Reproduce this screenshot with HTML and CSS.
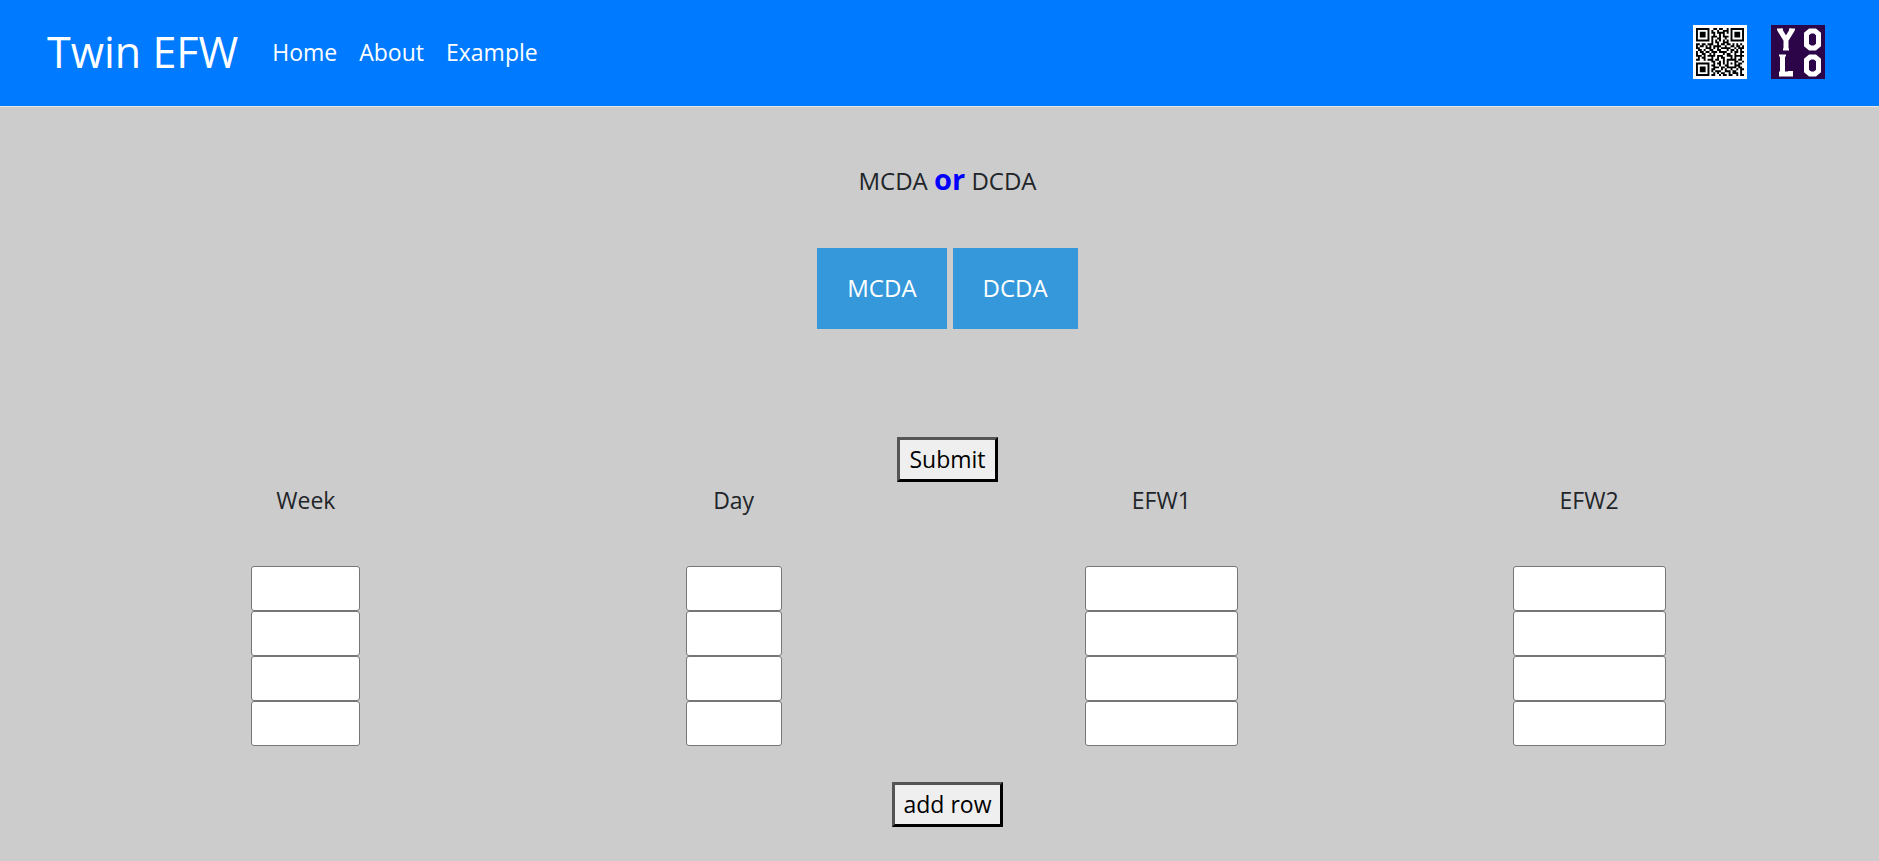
FILE: index.html
```html
<!DOCTYPE html>
<html lang="en">
<head>
<meta charset="utf-8">
<title>Twin EFW</title>
<link rel="stylesheet" href="styles.css">
</head>
<body>
<header class="navbar">
  <a class="brand" href="#">Twin EFW</a>
  <nav class="links">
    <a href="#">Home</a>
    <a href="#">About</a>
    <a href="#">Example</a>
  </nav>
  <div class="logos">
    <a href="#" aria-label="QR code">
      <svg class="logo" viewBox="0 0 54 54">
        <rect width="54" height="54" fill="#fff"/>
        <path id="modules" transform="translate(3 3) scale(1.92)" fill="#000"/>
      </svg>
    </a>
    <a href="#" aria-label="YOLO">
      <svg class="logo" viewBox="0 0 54 54">
        <rect width="54" height="54" fill="#2b0548"/>
        <g fill="none" stroke="#fff" stroke-width="5">
          <path d="M8.500 4.500 15 15 21.500 4.500M15 14V25"/>
          <path d="M12 24.500h6M6 4.500h6M18 4.500h6" stroke-width="2"/>
          <path d="M35.500 9 39 6H44L47.500 9V20L44 23H39L35.500 20Z"/>
          <path d="M11.500 30V49M8 49H19.500V46"/>
          <path d="M8 30.500h7" stroke-width="2"/>
          <path d="M35.500 35 39 32H44L47.500 35V46L44 49H39L35.500 46Z"/>
        </g>
      </svg>
    </a>
  </div>
</header>
<main class="content">
  <p class="prompt">MCDA <strong>or</strong> DCDA</p>
  <div class="choices">
    <button class="choice" type="button">MCDA</button>
    <button class="choice" type="button">DCDA</button>
  </div>
  <form class="form">
    <button class="action" type="submit">Submit</button>
    <div class="grid">
      <div class="column week"><h2 id="week">Week</h2><input type="number" aria-labelledby="week"><input type="number" aria-labelledby="week"><input type="number" aria-labelledby="week"><input type="number" aria-labelledby="week"></div>
      <div class="column day"><h2 id="day">Day</h2><input type="number" aria-labelledby="day"><input type="number" aria-labelledby="day"><input type="number" aria-labelledby="day"><input type="number" aria-labelledby="day"></div>
      <div class="column weight"><h2 id="efw1">EFW1</h2><input type="number" aria-labelledby="efw1"><input type="number" aria-labelledby="efw1"><input type="number" aria-labelledby="efw1"><input type="number" aria-labelledby="efw1"></div>
      <div class="column weight"><h2 id="efw2">EFW2</h2><input type="number" aria-labelledby="efw2"><input type="number" aria-labelledby="efw2"><input type="number" aria-labelledby="efw2"><input type="number" aria-labelledby="efw2"></div>
    </div>
    <button class="action" type="button">add row</button>
  </form>
</main>
<script src="qr.js"></script>
</body>
</html>
```

FILE: qr.js
```js
// One string per module row, "#" is a dark module.
const rows = [
  "#######..##.##..#.#######",
  "#.....#.#..#..###.#.....#",
  "#.###.#.##.####.#.#.###.#",
  "#.###.#..#..#.#...#.###.#",
  "#.###.#.###.#.###.#.###.#",
  "#.....#.#..##..#..#.....#",
  "#######.#.#.#.#.#.#######",
  "........#.##..###........",
  "##.##.###..#.##.##.#.#.#.",
  "#.##.#.#.####..#..##.##.#",
  "##...###.#.#.#####..#.###",
  ".##.#..##..##...#.##.#.#.",
  "#.##.##.###.####..#.##.##",
  "#..##..#.#....#.##..#..#.",
  "###.#.####.###..###.#####",
  ".#.##...#..#.##...#.#..#.",
  "##..#.###.##..#.#####.##.",
  "........##..#.#.#...##..#",
  "#######..#.##.#.#.#.#.##.",
  "#.....#.##..#..##...###..",
  "#.###.#..###.##.#####.##.",
  "#.###.#.##...#.#..#..#.##",
  "#.###.#.#.###..###.##..#.",
  "#.....#..#.#.##..#.###.#.",
  "#######.##..#.##.##..#.##",
];

const path = rows
  .map((row, y) => [...row].map((c, x) => (c === "#" ? `M${x} ${y}h1v1h-1z` : "")).join(""))
  .join("");
document.getElementById("modules").setAttribute("d", path);
```

FILE: styles.css
```css
* { box-sizing: border-box; }
body {
  margin: 0;
  background: #ccc;
  color: #212529;
  font: 24px/36px "Segoe UI", "Open Sans", "Noto Sans", sans-serif;
}
.navbar {
  display: flex;
  align-items: center;
  padding: 15px 54px 17px 47px;
  background: #007bff;
  border-bottom: 1px solid #e7e7e7;
}
.navbar a { color: #fff; text-decoration: none; }
.brand { font-size: 43px; line-height: 74px; margin-right: 34px; }
.links { display: flex; gap: 22px; font-size: 23px; font-weight: 500; }
.logos { display: flex; gap: 24px; margin-left: auto; }
.logo { display: block; width: 54px; height: 54px; }
.content {
  display: flex;
  flex-direction: column;
  align-items: center;
  padding: 52px 76px 32px 92px;
}
.prompt { margin: 0; line-height: 40px; }
.prompt strong { color: #00f; font-size: 29px; }
.choices { display: flex; gap: 6px; margin-top: 47px; }
.choice {
  padding: 22px 30px 23px;
  border: 0;
  background: #3498db;
  color: #fff;
  font: inherit;
  font-weight: 500;
}
.form {
  display: flex;
  flex-direction: column;
  align-items: center;
  width: 100%;
  margin-top: 108px;
  font-size: 23px;
}
.action {
  padding: 1px 9px 2px;
  border: 3px solid;
  border-color: #555 #000 #000 #555;
  background: #efefef;
  color: #000;
  font: inherit;
}
.grid {
  display: grid;
  grid-template-columns: repeat(4, 1fr);
  width: 100%;
  margin-bottom: 36px;
}
.column { display: flex; flex-direction: column; align-items: center; }
.column h2 { margin: 0 0 48px; font: inherit; }
.column input {
  height: 45px;
  border: 1px solid #767676;
  border-radius: 3px;
  background: #fff;
  font: inherit;
}
.week input { width: 109px; }
.day input { width: 96px; }
.weight input { width: 153px; }
```
